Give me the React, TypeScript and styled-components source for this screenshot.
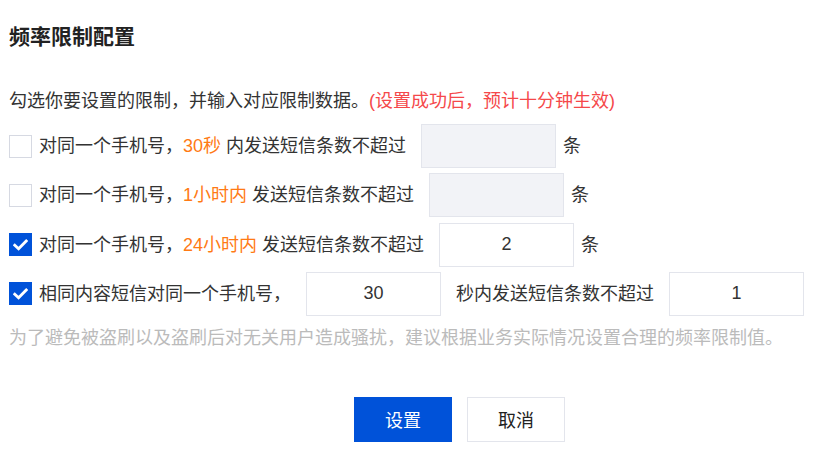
import React from "react";
import styled, { createGlobalStyle } from "styled-components";

const Global = createGlobalStyle`
  body { margin: 0; background: #fff; font-family: "Liberation Sans", "Noto Sans CJK SC", sans-serif; }
`;

const Page = styled.div`
  padding: 22px 0 0 9px;
  color: #333;
  font-size: 18px;
`;

const Title = styled.h2`
  margin: 0;
  font-size: 21px;
  line-height: 30px;
  font-weight: 700;
  color: #222;
`;

const Intro = styled.p`
  margin: 35px 0 0;
  line-height: 28px;
`;

const Warn = styled.span`
  color: #f5484a;
`;

const Rows = styled.div`
  margin-top: 9px;
  display: flex;
  flex-direction: column;
  gap: 5.33px;
`;

const Row = styled.div`
  display: flex;
  align-items: center;
  height: 44px;
`;

const Box = styled.span<{ $checked?: boolean }>`
  box-sizing: border-box;
  width: 23px;
  height: 23px;
  margin-right: 7px;
  flex: none;
  display: flex;
  align-items: center;
  justify-content: center;
  border: 1px solid ${(p) => (p.$checked ? "#0052d9" : "#d6d9e2")};
  background: ${(p) => (p.$checked ? "#0052d9" : "#fff")};
`;

const Label = styled.span`
  white-space: nowrap;
  line-height: 28px;
`;

const Hl = styled.span`
  color: #ff7a14;
`;

const Field = styled.input<{ $disabled?: boolean }>`
  box-sizing: border-box;
  width: 135px;
  height: 44px;
  margin: 0 15px;
  padding: 0;
  border: 1px solid #e3e5ec;
  background: ${(p) => (p.$disabled ? "#f2f3f7" : "#fff")};
  font: inherit;
  font-size: 18px;
  color: #333;
  text-align: center;
  outline: none;
`;

const Unit = styled.span`
  margin-left: -8px;
  line-height: 28px;
`;

const Hint = styled.p`
  margin: 8px 0 0;
  line-height: 28px;
  color: #bbbbbb;
  white-space: nowrap;
`;

const Actions = styled.div`
  margin-top: 45px;
  padding-left: 345px;
  display: flex;
  gap: 15px;
`;

const Btn = styled.button<{ $primary?: boolean }>`
  box-sizing: border-box;
  width: 98px;
  height: 45px;
  font: inherit;
  font-size: 18px;
  border: 1px solid ${(p) => (p.$primary ? "#0052d9" : "#e3e5ec")};
  background: ${(p) => (p.$primary ? "#0052d9" : "#fff")};
  color: ${(p) => (p.$primary ? "#fff" : "#222")};
  cursor: pointer;
`;

const Check = ({ checked }: { checked?: boolean }) => (
  <Box $checked={checked}>
    {checked && (
      <svg width="15" height="12" viewBox="0 0 15 12">
        <path d="M1.8 6.2 L5.6 9.8 L13.2 2" fill="none" stroke="#fff" strokeWidth="2.8" strokeLinecap="square" />
      </svg>
    )}
  </Box>
);

export default function App() {
  return (
    <Page>
      <Global />
      <Title>频率限制配置</Title>
      <Intro>
        勾选你要设置的限制，并输入对应限制数据。<Warn>(设置成功后，预计十分钟生效)</Warn>
      </Intro>
      <Rows>
        <Row>
          <Check />
          <Label>
            对同一个手机号，<Hl>30秒</Hl> 内发送短信条数不超过
          </Label>
          <Field $disabled disabled defaultValue="" />
          <Unit>条</Unit>
        </Row>
        <Row>
          <Check />
          <Label>
            对同一个手机号，<Hl>1小时内</Hl> 发送短信条数不超过
          </Label>
          <Field $disabled disabled defaultValue="" />
          <Unit>条</Unit>
        </Row>
        <Row>
          <Check checked />
          <Label>
            对同一个手机号，<Hl>24小时内</Hl> 发送短信条数不超过
          </Label>
          <Field defaultValue="2" />
          <Unit>条</Unit>
        </Row>
        <Row>
          <Check checked />
          <Label>相同内容短信对同一个手机号，</Label>
          <Field defaultValue="30" />
          <Label>秒内发送短信条数不超过</Label>
          <Field defaultValue="1" />
        </Row>
      </Rows>
      <Hint>为了避免被盗刷以及盗刷后对无关用户造成骚扰，建议根据业务实际情况设置合理的频率限制值。</Hint>
      <Actions>
        <Btn $primary>设置</Btn>
        <Btn>取消</Btn>
      </Actions>
    </Page>
  );
}
